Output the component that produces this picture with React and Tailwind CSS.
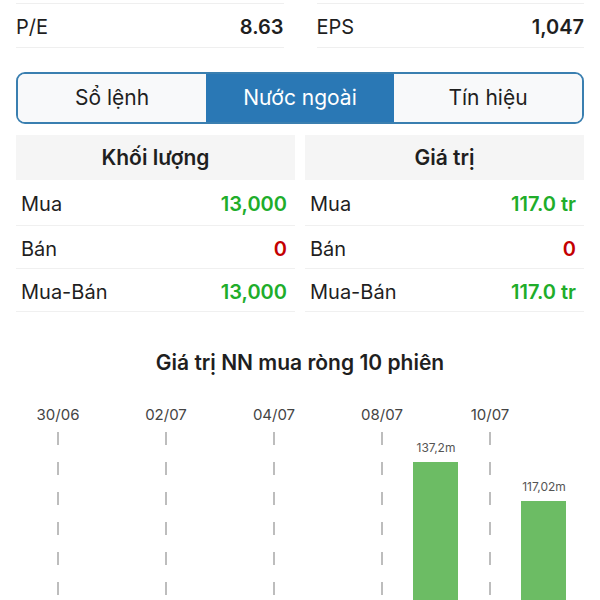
import React from 'react';

const metrics = [
  { label: 'P/E', value: '8.63' },
  { label: 'EPS', value: '1,047' },
];

const tables = [
  {
    title: 'Khối lượng',
    rows: [
      { label: 'Mua', value: '13,000', tone: 'up', h: 'h-[46px]' },
      { label: 'Bán', value: '0', tone: 'down', h: 'h-[43px]' },
      { label: 'Mua-Bán', value: '13,000', tone: 'up', h: 'h-[43px]' },
    ],
  },
  {
    title: 'Giá trị',
    rows: [
      { label: 'Mua', value: '117.0 tr', tone: 'up', h: 'h-[46px]' },
      { label: 'Bán', value: '0', tone: 'down', h: 'h-[43px]' },
      { label: 'Mua-Bán', value: '117.0 tr', tone: 'up', h: 'h-[43px]' },
    ],
  },
];

const tabs = ['Sổ lệnh', 'Nước ngoài', 'Tín hiệu'];

// 10 sessions, 54px per slot, first slot centred at x=58
const dates = ['30/06', '02/07', '04/07', '08/07', '10/07'];
const bars = [
  { slot: 7, top: 77, label: '137,2m' },
  { slot: 9, top: 116, label: '117,02m' },
];

function NetBuyChart() {
  return (
    <svg width="600" height="215" viewBox="0 0 600 215" className="block">
      {dates.map((d, i) => {
        const x = 58 + i * 108;
        return (
          <g key={d}>
            <text x={x} y={35} textAnchor="middle" fontSize="15" fill="#444">
              {d}
            </text>
            <line x1={x} y1={47} x2={x} y2={215} stroke="#bdbdbd" strokeWidth="2" strokeDasharray="13 17" />
          </g>
        );
      })}
      {bars.map((b) => {
        const cx = 58 + b.slot * 54;
        return (
          <g key={b.label}>
            <rect x={cx - 23} y={b.top} width="45" height={215 - b.top} fill="#6cbc64" />
            <text x={cx} y={b.top - 10} textAnchor="middle" fontSize="12" fill="#555">
              {b.label}
            </text>
          </g>
        );
      })}
    </svg>
  );
}

export default function App() {
  return (
    <div className="w-[600px] h-[600px] overflow-hidden bg-white text-[#1f1f1f] font-['Inter',sans-serif]">
      {/* chỉ số */}
      <div className="flex gap-[33px] px-[16px] pt-[3px]">
        {metrics.map((m) => (
          <div key={m.label} className="flex-1 h-[45px] pt-[3px] flex items-center justify-between border-y border-[#efefef] text-[20px]">
            <span>{m.label}</span>
            <span className="font-semibold">{m.value}</span>
          </div>
        ))}
      </div>

      {/* tabs */}
      <div className="mx-[16px] mt-[24px] h-[52px] grid grid-cols-3 border-2 border-[#3a7fb0] rounded-[9px] overflow-hidden text-[21px]">
        {tabs.map((t, i) => (
          <div
            key={t}
            className={i === 1 ? 'flex items-center justify-center bg-[#2a78b5] text-white' : 'flex items-center justify-center bg-[#f8f9fa]'}
          >
            {t}
          </div>
        ))}
      </div>

      {/* bảng khối lượng / giá trị */}
      <div className="grid grid-cols-2 gap-[10px] px-[16px] mt-[11px]">
        {tables.map((tb) => (
          <div key={tb.title}>
            <div className="h-[45px] flex items-center justify-center bg-[#f5f5f5] text-[21px] font-semibold">
              {tb.title}
            </div>
            {tb.rows.map((r) => (
              <div key={r.label} className={`${r.h} pt-[3px] flex items-center justify-between pl-[5px] pr-[8px] border-b border-[#f0f0f0] text-[20px]`}>
                <span>{r.label}</span>
                <span className={r.tone === 'up' ? 'font-semibold text-[#20ad2a]' : 'font-semibold text-[#c40000]'}>
                  {r.value}
                </span>
              </div>
            ))}
          </div>
        ))}
      </div>

      <div className="mt-[38px] mb-[9px] h-[26px] flex items-center justify-center text-[21px] font-semibold">
        Giá trị NN mua ròng 10 phiên
      </div>

      <NetBuyChart />
    </div>
  );
}
